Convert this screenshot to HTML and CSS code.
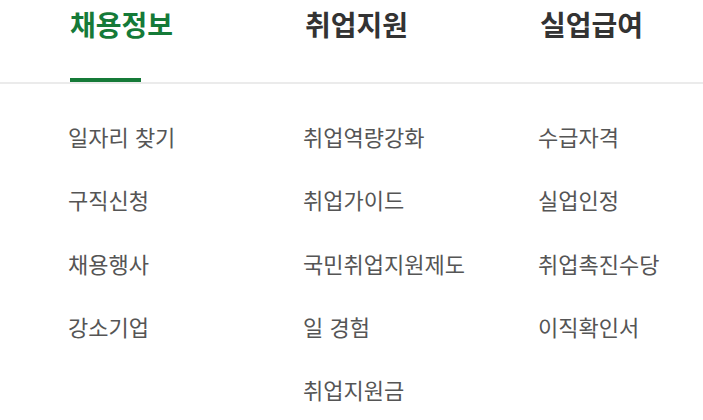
FILE: index.html
```html
<!DOCTYPE html>
<html lang="ko">
<head>
<meta charset="utf-8">
<title>메뉴</title>
<link rel="stylesheet" href="styles.css">
</head>
<body>
<nav class="menu">
  <div class="tabs">
    <div class="tab active">채용정보</div>
    <div class="tab">취업지원</div>
    <div class="tab">실업급여</div>
  </div>
  <div class="lists">
    <ul class="list">
      <li>일자리 찾기</li>
      <li>구직신청</li>
      <li>채용행사</li>
      <li>강소기업</li>
    </ul>
    <ul class="list">
      <li>취업역량강화</li>
      <li>취업가이드</li>
      <li>국민취업지원제도</li>
      <li>일 경험</li>
      <li>취업지원금</li>
    </ul>
    <ul class="list">
      <li>수급자격</li>
      <li>실업인정</li>
      <li>취업촉진수당</li>
      <li>이직확인서</li>
    </ul>
  </div>
</nav>
</body>
</html>
```

FILE: styles.css
```css
html, body {
  margin: 0;
  padding: 0;
  background: #ffffff;
  font-family: "Noto Sans CJK KR", "Noto Sans", sans-serif;
}

.menu {
  width: 703px;
}

.tabs {
  display: grid;
  grid-template-columns: 235px 235px 1fr;
  padding-left: 70px;
  height: 82px;
  border-bottom: 2px solid #ebebeb;
}

.tab {
  position: relative;
  font-size: 28px;
  font-weight: 700;
  line-height: 38px;
  padding-top: 5px;
  color: #333333;
  white-space: nowrap;
}

.tab.active {
  color: #157a38;
}

.tab.active::after {
  content: "";
  position: absolute;
  left: 0;
  bottom: 0;
  width: 71px;
  height: 4px;
  background: #157a38;
}

.lists {
  display: grid;
  grid-template-columns: 235px 235px 1fr;
  padding-left: 68px;
  padding-top: 21px;
}

.list {
  list-style: none;
  margin: 0;
  padding: 0;
}

.list li {
  height: 63.25px;
  line-height: 63px;
  font-size: 22px;
  color: #555555;
  white-space: nowrap;
}
```
